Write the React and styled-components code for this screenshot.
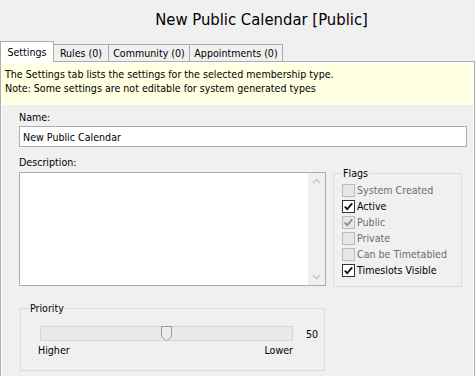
import styled, { createGlobalStyle } from "styled-components";

const GlobalStyle = createGlobalStyle`
  html, body {
    margin: 0;
    padding: 0;
    background: #f0f0f0;
  }
  body {
    font-family: "DejaVu Sans Condensed", "DejaVu Sans", sans-serif;
    font-size: 10.6px;
    color: #000;
    overflow: hidden;
  }
`;

const Page = styled.div`
  width: 475px;
  height: 376px;
  overflow: hidden;
`;

const Title = styled.h1`
  margin: 0;
  height: 41px;
  box-sizing: border-box;
  padding-top: 9px;
  padding-left: 48px;
  text-align: center;
  font-size: 16.5px;
  font-weight: normal;
  line-height: 22px;
`;

const TabStrip = styled.div`
  display: flex;
  align-items: flex-end;
  height: 21px;
  position: relative;
  z-index: 1;
  margin-bottom: -1px;
`;

const Tab = styled.div`
  box-sizing: border-box;
  width: ${(p) => p.$w}px;
  height: ${(p) => (p.$active ? 21 : 18)}px;
  margin-left: ${(p) => (p.$first ? 0 : -1)}px;
  border: 1px solid #acacac;
  border-bottom: ${(p) => (p.$active ? "none" : "1px solid #acacac")};
  background: ${(p) => (p.$active ? "#fff" : "#f0f0f0")};
  display: flex;
  align-items: center;
  justify-content: center;
  white-space: nowrap;
`;

const Panel = styled.div`
  box-sizing: border-box;
  width: 475px;
  height: 330px;
  border: 1px solid #acacac;
  background: #fff;
  padding: 1px;
`;

const Inner = styled.div`
  background: #f0f0f0;
  height: 100%;
`;

const Info = styled.div`
  background: #ffffe1;
  padding: 4px 3px 10px;
  line-height: 14px;
`;

const Form = styled.div`
  padding: 6px 6px 0 17px;
`;

const Label = styled.div`
  line-height: 13px;
  margin-top: ${(p) => p.$top || 0}px;
  margin-bottom: ${(p) => p.$bottom || 0}px;
`;

const TextInput = styled.div`
  box-sizing: border-box;
  height: 21px;
  border: 1px solid #abadb3;
  background: #fff;
  padding-left: 3px;
  display: flex;
  align-items: center;
`;

const Row = styled.div`
  display: flex;
  align-items: flex-start;
  gap: 7px;
`;

const TextArea = styled.div`
  box-sizing: border-box;
  width: 307px;
  height: 114px;
  border: 1px solid #abadb3;
  background: #fff;
  display: flex;
  justify-content: flex-end;
`;

const ScrollBar = styled.div`
  width: 17px;
  background: #f0f0f0;
  display: flex;
  flex-direction: column;
  justify-content: space-between;
  align-items: center;
  padding: 5px 0;
`;

const Group = styled.div`
  position: relative;
  box-sizing: border-box;
  width: ${(p) => p.$w}px;
  height: ${(p) => p.$h}px;
  margin-top: ${(p) => p.$top || 0}px;
  margin-left: ${(p) => p.$left || 0}px;
  border: 1px solid #dcdcdc;
`;

const Legend = styled.span`
  position: absolute;
  top: -7px;
  left: 8px;
  padding: 0 1px;
  background: #f0f0f0;
  line-height: 13px;
`;

const FlagList = styled.div`
  padding-top: 8px;
  padding-left: 8px;
`;

const FlagRow = styled.div`
  height: 16px;
  display: flex;
  align-items: center;
  gap: 2px;
  color: ${(p) => (p.$disabled ? "#6d6d6d" : "#000")};
`;

const Box = styled.span`
  box-sizing: border-box;
  width: 13px;
  height: 13px;
  border: 1px solid ${(p) => (p.$disabled ? "#bcbcbc" : "#333")};
  background: ${(p) => (p.$disabled ? "#e6e6e6" : "#fff")};
  display: flex;
  align-items: center;
  justify-content: center;
`;

const SliderRow = styled.div`
  display: flex;
  align-items: center;
  padding: 17px 0 0 19px;
`;

const Track = styled.div`
  position: relative;
  box-sizing: border-box;
  width: 253px;
  height: 15px;
  background: #e7eaea;
  border: 1px solid #d6d6d6;
`;

const Thumb = styled.svg`
  position: absolute;
  left: 120px;
  top: -1px;
`;

const Value = styled.span`
  margin-left: 13px;
`;

const Scale = styled.div`
  display: flex;
  justify-content: space-between;
  width: 255px;
  margin: 3px 0 0 17px;
  line-height: 13px;
`;

function Check({ checked, disabled }) {
  return (
    <Box $disabled={disabled}>
      {checked && (
        <svg width="11" height="11" viewBox="0 0 11 11">
          <path
            d="M1.8 5.6 L4.2 8.2 L9.2 2.4"
            fill="none"
            stroke={disabled ? "#8a8a8a" : "#000"}
            strokeWidth="1.7"
          />
        </svg>
      )}
    </Box>
  );
}

function Chevron({ up }) {
  return (
    <svg width="9" height="6" viewBox="0 0 9 6">
      <path
        d={up ? "M1 5 L4.5 1.5 L8 5" : "M1 1 L4.5 4.5 L8 1"}
        fill="none"
        stroke="#c2c2c2"
        strokeWidth="1.3"
      />
    </svg>
  );
}

const flags = [
  { label: "System Created", checked: false, disabled: true },
  { label: "Active", checked: true, disabled: false },
  { label: "Public", checked: true, disabled: true },
  { label: "Private", checked: false, disabled: true },
  { label: "Can be Timetabled", checked: false, disabled: true },
  { label: "Timeslots Visible", checked: true, disabled: false },
];

export default function App() {
  return (
    <Page>
      <GlobalStyle />
      <Title>New Public Calendar [Public]</Title>
      <TabStrip>
        <Tab $active $first $w={54}>
          Settings
        </Tab>
        <Tab $w={56}>Rules (0)</Tab>
        <Tab $w={82}>Community (0)</Tab>
        <Tab $w={94}>Appointments (0)</Tab>
      </TabStrip>
      <Panel>
        <Inner>
          <Info>
            The Settings tab lists the settings for the selected membership
            type.
            <br />
            Note: Some settings are not editable for system generated types
          </Info>
          <Form>
            <Label $bottom={2}>Name:</Label>
            <TextInput>New Public Calendar</TextInput>
            <Label $top={9} $bottom={3}>
              Description:
            </Label>
            <Row>
              <TextArea>
                <ScrollBar>
                  <Chevron up />
                  <Chevron />
                </ScrollBar>
              </TextArea>
              <Group $w={129} $h={114} $top={1}>
                <Legend>Flags</Legend>
                <FlagList>
                  {flags.map((f) => (
                    <FlagRow key={f.label} $disabled={f.disabled}>
                      <Check checked={f.checked} disabled={f.disabled} />
                      {f.label}
                    </FlagRow>
                  ))}
                </FlagList>
              </Group>
            </Row>
            <Group $w={305} $h={63} $top={21} $left={1}>
              <Legend>Priority</Legend>
              <SliderRow>
                <Track>
                  <Thumb width="11" height="16" viewBox="0 0 11 16">
                    <path
                      d="M0.5 0.5 H10.5 V10.5 L5.5 15 L0.5 10.5 Z"
                      fill="#eceeee"
                      stroke="#9a9a9a"
                    />
                  </Thumb>
                </Track>
                <Value>50</Value>
              </SliderRow>
              <Scale>
                <span>Higher</span>
                <span>Lower</span>
              </Scale>
            </Group>
          </Form>
        </Inner>
      </Panel>
    </Page>
  );
}
